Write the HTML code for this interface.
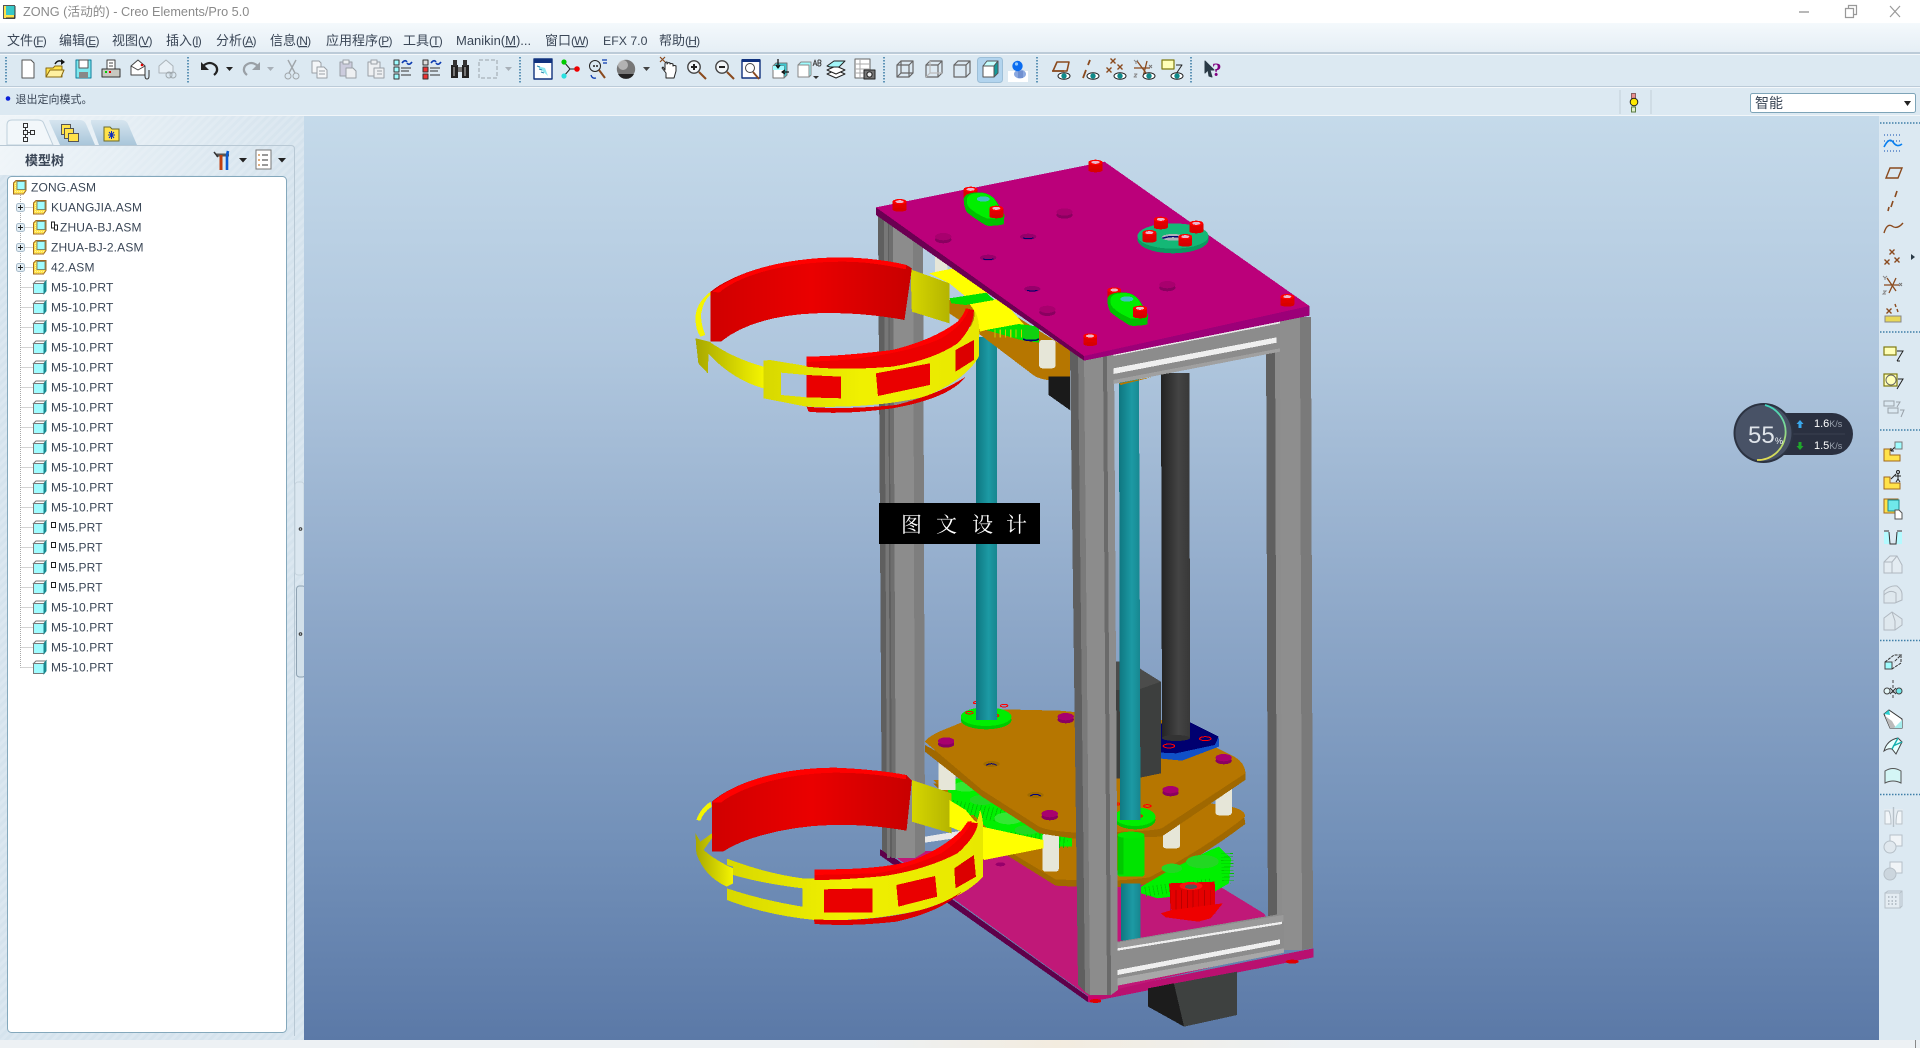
<!DOCTYPE html>
<html><head><meta charset="utf-8"><title>ZONG (活动的) - Creo Elements/Pro 5.0</title>
<style>
html,body{margin:0;padding:0;width:1920px;height:1048px;overflow:hidden;background:#dce9f2}
svg{display:block;position:absolute;left:0;top:0}
text{font-family:"Liberation Sans","Noto Sans CJK SC",sans-serif;fill:#3a4656}
.m{font-size:13px}.t{font-size:12px;letter-spacing:.15px}
.l{font-size:12px;letter-spacing:-.8px}
.u{text-decoration:underline}
</style></head><body>
<svg width="1920" height="1048" viewBox="0 0 1920 1048" xmlns="http://www.w3.org/2000/svg">
<defs>
<linearGradient id="vp" x1="0" y1="0" x2="0" y2="1"><stop offset="0" stop-color="#c5daea"/><stop offset=".25" stop-color="#b0c7de"/><stop offset=".55" stop-color="#8da7c8"/><stop offset=".78" stop-color="#7391b9"/><stop offset="1" stop-color="#5b79a7"/></linearGradient>
<linearGradient id="mn" x1="0" y1="0" x2="0" y2="1"><stop offset="0" stop-color="#f4f9fc"/><stop offset="1" stop-color="#e5eef5"/></linearGradient>
<linearGradient id="bt" x1="0" y1="0" x2="1" y2="0"><stop offset="0" stop-color="#edf1f4"/><stop offset=".45" stop-color="#edf1f4"/><stop offset=".55" stop-color="#f3ecdf"/><stop offset=".68" stop-color="#edf1f4"/><stop offset="1" stop-color="#edf1f4"/></linearGradient>
<linearGradient id="pn" x1="0" y1="0" x2="1" y2="0"><stop offset="0" stop-color="#f2f7fa" stop-opacity=".9"/><stop offset="1" stop-color="#f2f7fa" stop-opacity="0"/></linearGradient>
<linearGradient id="tl" x1="0" y1="0" x2="1" y2="0"><stop offset="0" stop-color="#0e7680"/><stop offset=".6" stop-color="#1c9aa4"/><stop offset="1" stop-color="#17868f"/></linearGradient>
<linearGradient id="dk" x1="0" y1="0" x2="1" y2="0"><stop offset="0" stop-color="#222"/><stop offset=".6" stop-color="#444"/><stop offset="1" stop-color="#383838"/></linearGradient>
<linearGradient id="rd" x1="0" y1="0" x2="1" y2="0"><stop offset="0" stop-color="#d00000"/><stop offset=".5" stop-color="#ea0000"/><stop offset="1" stop-color="#c80000"/></linearGradient>
<linearGradient id="yl" x1="0" y1="0" x2="1" y2="0"><stop offset="0" stop-color="#d8d800"/><stop offset=".45" stop-color="#f0f000"/><stop offset="1" stop-color="#e8e800"/></linearGradient>
<linearGradient id="yd" x1="0" y1="0" x2="1" y2="0"><stop offset="0" stop-color="#a8a800"/><stop offset="1" stop-color="#f4f400"/></linearGradient>
<linearGradient id="yc" x1="0" y1="0" x2="1" y2="0"><stop offset="0" stop-color="#d6d600"/><stop offset="1" stop-color="#b4b400"/></linearGradient>
<linearGradient id="ta" x1="0" y1="0" x2="0" y2="1"><stop offset="0" stop-color="#d6e5ef"/><stop offset="1" stop-color="#a9c6da"/></linearGradient>
<linearGradient id="ring" x1="0" y1="0" x2="0" y2="1"><stop offset="0" stop-color="#3ed6c0"/><stop offset="1" stop-color="#e4dc50"/></linearGradient>
<pattern id="ht" width="6" height="6" patternUnits="userSpaceOnUse" patternTransform="rotate(45)"><rect width="6" height="6" fill="#dbe7f0"/><rect width="3" height="6" fill="#d5e3ed"/></pattern>
<pattern id="ck" width="2" height="2" patternUnits="userSpaceOnUse"><rect width="2" height="2" fill="#ffe24a"/><rect width="1" height="1" fill="#fff4a0"/></pattern>
<g id="b"><rect x="-17" y="-10" width="34" height="24" fill="#e00000"/><ellipse cx="0" cy="14" rx="17" ry="6" fill="#d80000"/><ellipse cx="0" cy="-10" rx="17" ry="8" fill="#ff0000"/><ellipse cx="0" cy="-10" rx="10" ry="4.500" fill="#eab4cc"/></g>
<g id="pb"><ellipse cx="0" cy="6" rx="20" ry="11" fill="#8a0060"/><ellipse cx="0" cy="-3" rx="20" ry="11" fill="#a8006e"/></g>
<g id="h"><ellipse cx="0" cy="0" rx="20" ry="9" fill="#96006b"/><path d="M-13 4Q0 8 13 4" stroke="#000070" stroke-width="3" fill="none"/></g>
<g id="gm"><path d="M-48 -8Q-45 -28 -10 -28Q20 -28 36 6L52 40L50 68Q30 74 8 72Q-20 52 -40 32Q-48 15 -48 -8Z" fill="#00c000"/><path d="M-40 -8Q-38 -26 -5 -26Q22 -24 34 6L50 44Q30 54 8 50Q-20 35 -34 18Q-42 8 -40 -8Z" fill="#00ee00"/><ellipse cx="0" cy="-8" rx="16" ry="8" fill="#40c0c0"/><use href="#b" x="32" y="30"/></g>
<g id="ip"><path d="M.5 -3.500L3 -6H13L11 -3.500Z" fill="#fff" stroke="#777"/><rect x=".5" y="-3.500" width="10.500" height="10" fill="#9ffcff" stroke="#7a7a7a"/><path d="M11 -3.500L13 -6V4L11 6.500Z" fill="#1a8a90" stroke="#1a8a90"/></g>
<g id="ia"><rect x=".5" y="-4" width="10" height="11" fill="url(#ck)" stroke="#a06820"/><path d="M.5 -4L3 -6.500H13V3.500L10.500 7" fill="url(#ck)" stroke="#a06820"/><rect x="4" y="-5.500" width="8" height="8" fill="#9ffcff" stroke="#7a8a70"/></g>
<g id="eye"><ellipse cx="0" cy="0" rx="6" ry="3.200" fill="#fff" stroke="#222"/><circle r="2.700" fill="#0f8a8a"/></g>
<g id="x1"><path d="M-2.500 -2.500L2.500 2.500M2.500 -2.500L-2.500 2.500" stroke="#8a4a1e" stroke-width="1.400"/></g>
</defs>

<!-- chrome -->
<rect width="1920" height="1048" fill="#dce9f2"/>
<rect width="1920" height="23" fill="#fff"/>
<rect y="23" width="1920" height="30" fill="url(#mn)"/>
<rect y="52" width="1920" height="2" fill="#bccbd8"/><rect y="54" width="1920" height="1" fill="#f4f8fb"/>
<rect y="86" width="1920" height="1" fill="#bccbd8"/><rect y="87" width="1920" height="1" fill="#f4f8fb"/>
<rect y="115" width="1920" height="1.500" fill="#f2f6f9"/>
<rect x="0" y="1040" width="1920" height="8" fill="url(#bt)"/>
<text x="1863" y="1058" font-size="15" style="fill:#111">21:21</text>
<rect x="1915" y="1040" width="1" height="8" fill="#888"/>

<!-- title -->
<g transform="translate(3 5)"><rect x=".5" y=".5" width="11" height="13" fill="#ffe24a" stroke="#555"/><rect x="3" y="1" width="9" height="9" fill="#38c8c8"/><path d="M12 1V13H3" fill="none" stroke="#333"/></g>
<text x="23" y="16" font-size="12.700" style="fill:#8a8a8a">ZONG (活动的) - Creo Elements/Pro 5.0</text>
<path d="M1799 12H1809" stroke="#999" stroke-width="1.400"/>
<path d="M1845.500 8.500h8v9h-8zM1848.500 8.500v-3h8v9h-3" fill="none" stroke="#999" stroke-width="1.200"/>
<path d="M1890 6L1900 17M1900 6L1890 17" stroke="#999" stroke-width="1.200"/>

<!-- menu -->
<text class="m" x="7" y="45">文件<tspan class="l">(<tspan class="u">F</tspan>)</tspan></text>
<text class="m" x="59" y="45">编辑<tspan class="l">(<tspan class="u">E</tspan>)</tspan></text>
<text class="m" x="112" y="45">视图<tspan class="l">(<tspan class="u">V</tspan>)</tspan></text>
<text class="m" x="166" y="45">插入<tspan class="l">(<tspan class="u">I</tspan>)</tspan></text>
<text class="m" x="216" y="45">分析<tspan class="l">(<tspan class="u">A</tspan>)</tspan></text>
<text class="m" x="270" y="45">信息<tspan class="l">(<tspan class="u">N</tspan>)</tspan></text>
<text class="m" x="326" y="45">应用程序<tspan class="l">(<tspan class="u">P</tspan>)</tspan></text>
<text class="m" x="403" y="45">工具<tspan class="l">(<tspan class="u">T</tspan>)</tspan></text>
<text class="m" x="456" y="45">Manikin(<tspan class="u">M</tspan>)...</text>
<text class="m" x="545" y="45">窗口<tspan class="l">(<tspan class="u">W</tspan>)</tspan></text>
<text x="603" y="45" font-size="12.300">EFX 7.0</text>
<text class="m" x="659" y="45">帮助<tspan class="l">(<tspan class="u">H</tspan>)</tspan></text>

<!-- toolbar separators -->
<path d="M6 57V84M188 57V84M520 57V84M884 57V84M1037 57V84M1191 57V84" stroke="#3f7fa8" stroke-width="1.600" stroke-dasharray="1.500 1.500"/>

<!-- toolbar icons -->
<g fill="none" stroke-linejoin="round">
<g transform="translate(28 69)"><path d="M-6 -9H3L6 -6V9H-6Z" fill="#fff" stroke="#555"/></g>
<g transform="translate(55 69)"><path d="M-9 -1H-2L0 -3H7V8H-9Z" fill="#ffe24a" stroke="#8a6a10"/><path d="M-9 8L-5 1H9L6 8Z" fill="#fff0a0" stroke="#8a6a10"/><path d="M0 -5Q3 -10 8 -7" stroke="#111" stroke-width="1.500"/><path d="M6 -10L10 -7L6 -4Z" fill="#111"/></g>
<g transform="translate(84 69)"><rect x="-8" y="-9" width="15" height="18" fill="#7fe8ee" stroke="#0c7c9a"/><rect x="-5" y="-9" width="9" height="8" fill="#fff" stroke="#555"/><rect x="-5" y="3" width="9" height="6" fill="#888"/></g>
<g transform="translate(111 69)"><rect x="-4" y="-9" width="8" height="9" fill="#fff" stroke="#444"/><path d="M-2 -6H2M-2 -3H2" stroke="#444"/><rect x="-9" y="0" width="18" height="8" fill="#c8c8c0" stroke="#333"/><path d="M-6 3h2" stroke="#0c0" stroke-width="2"/><path d="M-2 3h2" stroke="#d00" stroke-width="2"/></g>
<g transform="translate(139 69)"><path d="M-8 -3L-1 -9L6 -3V6H-8Z" fill="#fff" stroke="#444"/><path d="M-8 -3L-1 1L6 -3" stroke="#444"/><circle cx="3" cy="-4" r="1.300" fill="#d00"/><path d="M6 -1V7Q6 10 8 10Q10 10 10 7V1" stroke="#333"/></g>
<g transform="translate(167 69)" opacity=".35"><path d="M-8 -3L-1 -9L6 -3V4H-8Z" fill="#fff" stroke="#555"/><circle cx="2" cy="6" r="3" stroke="#333"/><circle cx="6" cy="6" r="3" stroke="#333"/></g>
<g transform="translate(210 69)"><path d="M-7 -3Q0 -9 6 -3Q9 2 4 6" stroke="#222" stroke-width="2.200"/><path d="M-9 -7V1H-1Z" fill="#222"/></g>
<path d="M226 67h7l-3.500 4z" fill="#222"/>
<g transform="translate(251 69)"><path d="M7 -3Q0 -9 -6 -3Q-9 2 -4 6" stroke="#9aa0a6" stroke-width="2.200"/><path d="M9 -7V1H1Z" fill="#9aa0a6"/></g>
<path d="M267 67h7l-3.500 4z" fill="#a8b0b8"/>
<g transform="translate(292 69)" stroke="#a0a6aa"><path d="M-4 -9L3 4M4 -9L-3 4" stroke-width="1.400"/><circle cx="-4" cy="7" r="3"/><circle cx="4" cy="7" r="3"/></g>
<g transform="translate(320 69)" fill="#f4f6f8" stroke="#9aa0a6"><path d="M-8 -8H-1L1 -6V4H-8Z"/><path d="M-3 -2H4L7 1V9H-3Z"/><path d="M-1 2H5M-1 5H5"/></g>
<g transform="translate(348 69)" fill="#eef0f2" stroke="#9aa0a6"><rect x="-8" y="-7" width="12" height="14" fill="#ccd"/><rect x="-5" y="-9" width="6" height="4"/><path d="M-2 -1H5L8 2V9H-2Z"/></g>
<g transform="translate(376 69)" fill="#eef0f2" stroke="#9aa0a6"><rect x="-8" y="-7" width="12" height="14"/><rect x="-5" y="-9" width="6" height="4"/><rect x="-2" y="-1" width="10" height="10"/><path d="M1 2h5M1 5h5"/></g>
<g transform="translate(403 69)"><rect x="-9" y="-9" width="5" height="5" fill="#9ffcff" stroke="#333"/><rect x="-9" y="-2" width="5" height="5" fill="#9ffcff" stroke="#333"/><rect x="-9" y="5" width="5" height="5" fill="#9ffcff" stroke="#333"/><path d="M-2 -1h10M-2 2h8M-2 6h10" stroke="#333"/><path d="M-1 -6Q2 -10 4 -7M9 -7Q6 -3 4 -6" stroke="#0a3ab0" stroke-width="1.600"/></g>
<g transform="translate(432 69)"><rect x="-9" y="-9" width="5" height="5" fill="#ddd" stroke="#333"/><rect x="-9" y="-2" width="5" height="5" fill="#e33" stroke="#333"/><rect x="-9" y="5" width="5" height="5" fill="#e33" stroke="#333"/><path d="M-2 -1h10M-2 2h8M-2 6h10" stroke="#333"/><path d="M-1 -6Q2 -10 4 -7M9 -7Q6 -3 4 -6" stroke="#0a3ab0" stroke-width="1.600"/></g>
<g transform="translate(460 69)"><rect x="-9" y="-4" width="7" height="13" fill="#222"/><rect x="2" y="-4" width="7" height="13" fill="#222"/><rect x="-7" y="-9" width="4" height="6" fill="#333"/><rect x="3" y="-9" width="4" height="6" fill="#333"/><rect x="-2" y="-2" width="4" height="5" fill="#777"/><path d="M-6 -2V7M5 -2V7" stroke="#ccc"/></g>
<rect x="479" y="60" width="18" height="18" stroke="#9aa2aa" stroke-dasharray="4 2"/>
<path d="M505 67h7l-3.500 4z" fill="#a8b0b8"/>
<g transform="translate(543 69)"><rect x="-9" y="-10" width="18" height="20" fill="#fff" stroke="#11327e" stroke-width="1.400"/><rect x="-9" y="-10" width="18" height="4" fill="#11327e"/><path d="M-6 -3L5 7L2 -1Z" fill="#8fe8f0"/><path d="M-6 -3l3 1M-4 0l3 1M-2 3l3 1" stroke="#2a8ab0"/></g>
<g transform="translate(570 69)"><path d="M-6 -7L0 0L-6 7M0 0H7" stroke="#222"/><circle cx="-6" cy="-7" r="2.600" fill="#0c0"/><circle cx="-6" cy="7" r="2.600" fill="#2ae0e0"/><circle cx="7" cy="0" r="2.800" fill="#e00"/></g>
<g transform="translate(598 69)"><circle cx="-3" cy="-3" r="5.500" stroke="#222"/><path d="M1 1L7 9" stroke="#8a4a1e" stroke-width="2"/><circle cx="-4" cy="-3" r="1" fill="#222"/><circle cx="-1" cy="-3" r="1" fill="#222"/><path d="M4 -9h5M5 -6h4M-7 6Q-6 10 -2 9" stroke="#0a3ab0" stroke-width="1.300"/></g>
<circle cx="626" cy="69" r="9.200" fill="#777"/><circle cx="623" cy="65" r="5" fill="#ccc" opacity=".7"/><path d="M618 74a9 9 0 0 0 16 0" fill="#222"/>
<path d="M643 67h7l-3.500 4z" fill="#444"/>
<g transform="translate(669 69)"><path d="M-7 -1L-3 4V9H5L7 2V-3Q5 -4 4 -3V-5Q2 -6 1 -5V-6Q-1 -7 -2 -5L-2 -7Q-4 -7 -4 -5V1L-6 -2Z" fill="#fff" stroke="#222"/><path d="M-11 -11l5 5M-6 -11l-5 5" stroke="#8a4a1e" stroke-width="1.200" transform="translate(2 -1)"/></g>
<g transform="translate(696 69)"><circle cx="-2" cy="-2" r="6.200" fill="#f2f6f9" stroke="#444" stroke-width="1.400"/><path d="M-5 -2H1M-2 -5V1" stroke="#222" stroke-width="2"/><path d="M3 3L10 10" stroke="#8a4a1e" stroke-width="2"/></g>
<g transform="translate(724 69)"><circle cx="-2" cy="-2" r="6.200" fill="#f2f6f9" stroke="#444" stroke-width="1.400"/><path d="M-5 -2H1" stroke="#222" stroke-width="2"/><path d="M3 3L10 10" stroke="#8a4a1e" stroke-width="2"/></g>
<g transform="translate(751 69)"><rect x="-9" y="-9" width="18" height="18" fill="#fff" stroke="#11327e" stroke-width="1.400"/><rect x="-9" y="-10" width="18" height="3" fill="#11327e"/><circle cx="-1" cy="-1" r="4.500" stroke="#444"/><path d="M2 3L8 10" stroke="#8a4a1e" stroke-width="1.800"/></g>
<g transform="translate(779 69)"><rect x="-6" y="-3" width="11" height="12" fill="#fff" stroke="#777"/><path d="M-6 -3L-3 -6H8V6L5 9V-3Z" fill="#3ec8d0" stroke="#777"/><path d="M-6 -3H5V1H-6Z" fill="#9ffcff"/><path d="M-1 -10V-1M-3 -4L-1 -1L1 -4" stroke="#111" stroke-width="1.300"/><path d="M10 3H3M6 1L3 3L6 5" stroke="#111" stroke-width="1.300"/></g>
<g transform="translate(807 69)"><rect x="-9" y="-4" width="11" height="12" fill="#fff" stroke="#888"/><path d="M-9 -4L-6 -7H4V6L2 8V-4Z" fill="#9ffcff" stroke="#888"/><path d="M6 -3L8 -9L10 -3M7 -5H9" stroke="#444"/><path d="M12 -9V-3M12 -9H14Q16 -8 14 -6H12M14 -6Q16 -5 14 -3H12" stroke="#444" transform="translate(-1 0)"/><path d="M6 7h6l-3 3z" fill="#333"/></g>
<g transform="translate(836 69)" fill="#fff" stroke="#222"><path d="M-9 5L0 1L9 5L0 9Z"/><path d="M-9 1L0 -3L9 1L0 5Z"/><path d="M-9 -3L-2 -8H9L3 -2H-6Z" fill="#a2f6f8"/></g>
<g transform="translate(864 69)"><rect x="-9" y="-10" width="15" height="19" fill="#fff" stroke="#666"/><path d="M-9 -5H6M-9 0H6M-9 4H6M-4 -10V9" stroke="#aaa"/><rect x="0" y="1" width="11" height="9" fill="#777" stroke="#222"/><circle cx="5.500" cy="5.500" r="2.600" fill="#eee" stroke="#222"/></g>
<g transform="translate(905 69)" stroke="#666" stroke-width="1.200"><rect x="-8" y="-4" width="12" height="12"/><rect x="-4" y="-8" width="12" height="12"/><path d="M-8 -4L-4 -8M4 -4L8 -8M4 8L8 4M-8 8L-4 4"/></g>
<g transform="translate(934 69)" stroke="#666" stroke-width="1.200"><rect x="-8" y="-4" width="12" height="12"/><path d="M-8 -4L-4 -8H8V4L4 8M4 -4L8 -8"/><path d="M-4 -8V4H8M-8 8L-4 4" stroke="#bbb"/></g>
<g transform="translate(962 69)" stroke="#666" stroke-width="1.200"><rect x="-8" y="-4" width="12" height="12"/><path d="M-8 -4L-4 -8H8V4L4 8M4 -4L8 -8"/></g>
<rect x="977.500" y="57.500" width="25" height="25" rx="3" fill="#b2d4ee" stroke="#9dbfd8"/>
<g transform="translate(990 69)"><rect x="-7" y="-3" width="11" height="11" fill="#fff" stroke="#555"/><path d="M-7 -3L-3 -8H8L4 -3Z" fill="#c4ffff" stroke="#555"/><path d="M4 -3L8 -8V4L4 8Z" fill="#149a9a" stroke="#555"/></g>
<rect x="1008" y="71" width="20" height="11" fill="#fff"/><ellipse cx="1020" cy="74" rx="6" ry="4.500" fill="#8aa8e0"/><path d="M1018 71h5v7h-5" fill="#7090d0"/><circle cx="1017.500" cy="66" r="5.200" fill="#0a6cf0"/><circle cx="1016.500" cy="64" r="1.600" fill="#8fc8ff"/>
<g transform="translate(1060 69)"><path d="M-7 2L-3 -7H9L7 2Z" stroke="#8a4a1e" stroke-width="1.600" fill="none"/><path d="M-8 2H4" stroke="#8a4a1e" stroke-width="1.600"/><use href="#eye" x="4" y="7"/></g>
<g transform="translate(1089 69)"><path d="M1 -9L-1 -4M-3 1L-6 9" stroke="#8a4a1e" stroke-width="1.800"/><use href="#eye" x="4" y="7"/></g>
<g transform="translate(1115 69)"><use href="#x1" x="-2" y="-8"/><use href="#x1" x="-6" y="1"/><use href="#x1" x="5" y="-2"/><use href="#eye" x="5" y="7"/></g>
<g transform="translate(1144 69)"><path d="M-10 -1H6M-7 -8L2 4M3 -8L-1 8" stroke="#8a4a1e" stroke-width="1.300"/><path d="M-10 -9l2 2 2 -2M-8 -7v2M-10 5h3l-3 3h3" stroke="#888"/><use href="#eye" x="5" y="7"/><path d="M5 -4l3 3M8 -4l-3 3" stroke="#777"/></g>
<g transform="translate(1173 69)"><rect x="-11" y="-9" width="12" height="9" fill="#ffffb8" stroke="#7e7a10" stroke-width="1.200"/><path d="M3 -4H9L3 5M3 5h4" stroke="#222"/><use href="#eye" x="4" y="7"/></g>
<g transform="translate(1213 69)"><path d="M-8 -8L1 1H-3L-1 8L-4 7L-5 1L-8 4Z" fill="#2a3a46" stroke="#2a3a46"/></g>
<text x="1212" y="76" font-size="19" font-weight="bold" style="font-family:'Liberation Serif',serif;fill:#800080">?</text>
</g>

<!-- status -->
<circle cx="8" cy="98.500" r="2.300" fill="#0a20d8"/>
<text x="15.500" y="103" font-size="11">退出定向模式。</text>
<path d="M1620 90V114M1651 90V114" stroke="#c2ced8"/>
<rect x="1631.500" y="93.500" width="4" height="5" fill="#e88f8f" stroke="#8a6060"/><circle cx="1634" cy="102" r="3.800" fill="#ffe800" stroke="#222"/><rect x="1631.500" y="107" width="4" height="5" fill="#dfeecc" stroke="#5a7a40"/>
<rect x="1750.500" y="93.500" width="165" height="19" rx="2" fill="#fff" stroke="#7ea4b8"/>
<text x="1755" y="108" font-size="14">智能</text>
<path d="M1904 101h7l-3.500 5z" fill="#222"/>

<!-- left panel -->
<rect x="0" y="116" width="304" height="924" fill="url(#ht)"/>
<rect x="0" y="116" width="304" height="30" fill="url(#pn)"/>
<path d="M53 145L44 124Q43 120 38 120H12Q7 120 7 125V145Z" fill="#f2f7fa" stroke="#bfd0dc"/>
<path d="M49 120H80Q84 120 86 124L95 145H60L50 123Z" fill="url(#ta)"/>
<path d="M91 120H122Q126 120 128 124L137 145H99L91 123Z" fill="url(#ta)"/>
<g fill="none" stroke="#333"><rect x="23.500" y="123.500" width="4" height="4"/><rect x="23.500" y="130.500" width="4" height="4"/><rect x="23.500" y="137.500" width="4" height="4"/><rect x="30.500" y="130.500" width="4" height="4"/><path d="M25.500 127.500v3M25.500 134.500v3M27.500 132.500h3"/></g>
<g stroke="#555"><rect x="61.500" y="124.500" width="9" height="10" fill="#ffe24a"/><rect x="64.500" y="128.500" width="9" height="10" fill="#ffe24a"/><rect x="68.500" y="133.500" width="10" height="8" fill="#ffe24a"/></g>
<path d="M104 127h6l2 2h7v12h-15z" fill="#ffe24a" stroke="#6a6a30"/><path d="M108 135h7M111.500 131v8M109 132l5 6M114 132l-5 6" stroke="#0a2ac0"/>
<rect x="0" y="145" width="294" height="895" fill="url(#ht)"/>
<rect x="0" y="145" width="294" height="30" fill="url(#pn)"/>
<path d="M0 145.500H291Q294.500 145.500 294.500 149V1036" fill="none" stroke="#b8c8d4"/>
<text x="25" y="165" font-size="13" font-weight="bold">模型树</text>
<g transform="translate(224 160)"><path d="M-8 -5H5" stroke="#555" stroke-width="3"/><path d="M-3 -5V10" stroke="#c04010" stroke-width="3"/><path d="M4 -9L3 -5V10" stroke="#0a5ad0" stroke-width="2.600" fill="none"/><path d="M-10 -8L-6 -3" stroke="#333" stroke-width="1.500"/></g>
<path d="M239 158h8l-4 4.500z" fill="#222"/>
<g transform="translate(264 160)"><rect x="-8" y="-10" width="15" height="19" fill="#fff" stroke="#777"/><path d="M-2 -5H4M-2 0H4M-2 5H4" stroke="#333"/><path d="M-6 -5h2M-6 0h2M-6 5h2" stroke="#c06000"/></g>
<path d="M278 158h8l-4 4.500z" fill="#222"/>
<rect x="7.500" y="176.500" width="279" height="856" rx="4" fill="#fff" stroke="#84a8bc"/>
<rect x="295" y="482" width="9" height="93" rx="3" fill="#dbe7f0" stroke="#c6d4de"/><circle cx="300.500" cy="529" r="1.300" fill="none" stroke="#333"/>
<rect x="296.500" y="586" width="9" height="91" rx="3" fill="#d2e0ea" stroke="#8fa3b3"/><circle cx="300.500" cy="634" r="1.300" fill="none" stroke="#333"/>
<rect x="304" y="116" width="1575" height="924" fill="url(#vp)"/>

<!-- tree -->
<path d="M20.500 195V667.500M20.500 207.500H33M20.500 227.500H33M20.500 247.500H33M20.500 267.500H33M20.500 287.500H33M20.500 307.500H33M20.500 327.500H33M20.500 347.500H33M20.500 367.500H33M20.500 387.500H33M20.500 407.500H33M20.500 427.500H33M20.500 447.500H33M20.500 467.500H33M20.500 487.500H33M20.500 507.500H33M20.500 527.500H33M20.500 547.500H33M20.500 567.500H33M20.500 587.500H33M20.500 607.500H33M20.500 627.500H33M20.500 647.500H33M20.500 667.500H33" stroke="#a8a8a8" stroke-dasharray="1 1" fill="none"/>
<g fill="#e2edf4" stroke="#a9bccb"><rect x="16.500" y="203.500" width="8" height="8" rx="2"/><rect x="16.500" y="223.500" width="8" height="8" rx="2"/><rect x="16.500" y="243.500" width="8" height="8" rx="2"/><rect x="16.500" y="263.500" width="8" height="8" rx="2"/></g>
<path d="M18 207.500h5M20.500 205v5M18 227.500h5M20.500 225v5M18 247.500h5M20.500 245v5M18 267.500h5M20.500 265v5" stroke="#222"/>
<use href="#ia" x="13" y="187"/><use href="#ia" x="33" y="207"/><use href="#ia" x="33" y="227"/><use href="#ia" x="33" y="247"/><use href="#ia" x="33" y="267"/>
<use href="#ip" x="33" y="287"/><use href="#ip" x="33" y="307"/><use href="#ip" x="33" y="327"/><use href="#ip" x="33" y="347"/><use href="#ip" x="33" y="367"/><use href="#ip" x="33" y="387"/><use href="#ip" x="33" y="407"/><use href="#ip" x="33" y="427"/><use href="#ip" x="33" y="447"/><use href="#ip" x="33" y="467"/><use href="#ip" x="33" y="487"/><use href="#ip" x="33" y="507"/><use href="#ip" x="33" y="527"/><use href="#ip" x="33" y="547"/><use href="#ip" x="33" y="567"/><use href="#ip" x="33" y="587"/><use href="#ip" x="33" y="607"/><use href="#ip" x="33" y="627"/><use href="#ip" x="33" y="647"/><use href="#ip" x="33" y="667"/>
<text class="t" x="31" y="191.500">ZONG.ASM</text>
<text class="t" x="51" y="211.500">KUANGJIA.ASM</text>
<path d="M51.500 222v6h3v-6zM54.500 225h3v5h-3v-2" fill="#fff" stroke="#222"/>
<text class="t" x="60" y="231.500">ZHUA-BJ.ASM</text>
<text class="t" x="51" y="251.500">ZHUA-BJ-2.ASM</text>
<text class="t" x="51" y="271.500">42.ASM</text>
<text class="t" x="51" y="291.500">M5-10.PRT</text>
<text class="t" x="51" y="311.500">M5-10.PRT</text>
<text class="t" x="51" y="331.500">M5-10.PRT</text>
<text class="t" x="51" y="351.500">M5-10.PRT</text>
<text class="t" x="51" y="371.500">M5-10.PRT</text>
<text class="t" x="51" y="391.500">M5-10.PRT</text>
<text class="t" x="51" y="411.500">M5-10.PRT</text>
<text class="t" x="51" y="431.500">M5-10.PRT</text>
<text class="t" x="51" y="451.500">M5-10.PRT</text>
<text class="t" x="51" y="471.500">M5-10.PRT</text>
<text class="t" x="51" y="491.500">M5-10.PRT</text>
<text class="t" x="51" y="511.500">M5-10.PRT</text>
<rect x="51.500" y="522.500" width="4" height="5" fill="#fff" stroke="#222"/><text class="t" x="58" y="531.500">M5.PRT</text>
<rect x="51.500" y="542.500" width="4" height="5" fill="#fff" stroke="#222"/><text class="t" x="58" y="551.500">M5.PRT</text>
<rect x="51.500" y="562.500" width="4" height="5" fill="#fff" stroke="#222"/><text class="t" x="58" y="571.500">M5.PRT</text>
<rect x="51.500" y="582.500" width="4" height="5" fill="#fff" stroke="#222"/><text class="t" x="58" y="591.500">M5.PRT</text>
<text class="t" x="51" y="611.500">M5-10.PRT</text>
<text class="t" x="51" y="631.500">M5-10.PRT</text>
<text class="t" x="51" y="651.500">M5-10.PRT</text>
<text class="t" x="51" y="671.500">M5-10.PRT</text>

<!-- MODEL -->
<g shape-rendering="crispEdges">
<!-- lower plate -->
<g transform="translate(680 620) scale(.40816 .33333)">
<polygon points="490,688 510,700 1000,1130 1000,1147 490,706" fill="#5e004a"/>
<polygon points="1000,1122 1552,985 1552,1012 1000,1147" fill="#b91070"/>
<polygon points="510,695 800,690 1310,790 1430,880 1500,985 1000,1128" fill="#c01878"/>
<polygon points="600,650 700,630 700,650 600,668" fill="#e8e8e8"/>
<ellipse cx="785" cy="733" rx="12" ry="6" fill="#96006b"/>
<polygon points="1147,1105 1365,1055 1365,1185 1235,1220 1147,1160" fill="#3e4140"/>
<polygon points="1147,1105 1210,1090 1235,1220 1147,1160" fill="#1c1c1c"/>
<polygon points="1000,1130 1030,1130 1030,1148 1004,1148" fill="#d0006a"/>
<ellipse cx="1018" cy="1143" rx="14" ry="6" fill="#e00000"/><ellipse cx="1500" cy="1025" rx="16" ry="6" fill="#e00000"/>
</g>
<!-- left column -->
<polygon points="878,215 889,215 892,858 882,850" fill="#5f5f5f"/>
<polygon points="884,215 888,215 890,858 887,858" fill="#777"/>
<polygon points="889,215 893,215 896,858 892,858" fill="#6e6e6e"/>
<polygon points="893,215 913,215 915,858 896,858" fill="#8c8c8c"/>
<polygon points="913,215 923,215 925,852 915,858" fill="#7e7e7e"/>
<g transform="translate(680 620) scale(.40816 .33333)">
<!-- lower assembly -->
<path d="M620 490L1000 500L1350 565Q1385 575 1385 612Q1280 710 1150 792Q1075 805 1000 802L920 797L800 705Z" fill="#a06800"/>
<path d="M620 480L1000 490L1350 560Q1385 570 1385 590Q1280 690 1150 772Q1075 785 1000 782L920 778L800 690Z" fill="#b67600"/>
<rect x="1183" y="590" width="42" height="95" rx="8" fill="#e6e6d8"/>
<rect x="1312" y="498" width="40" height="88" rx="8" fill="#e6e6d8"/>
<!-- gears -->
<polygon points="1130,800 1200,750 1300,690 1320,680 1350,715 1345,790 1310,815 1170,835 1130,820" fill="#00f000"/>
<path d="M1140 815L1300 790M1340 700L1343 790" stroke="#00c800" stroke-width="30" stroke-dasharray="2 8" fill="none"/>
<ellipse cx="1280" cy="725" rx="40" ry="20" fill="#22d822"/><ellipse cx="1205" cy="745" rx="25" ry="14" fill="#22d822"/>
<polygon points="1198,790 1310,785 1312,880 1270,892 1205,887" fill="#e40000"/>
<path d="M1200 845H1312" stroke="#b80000" stroke-width="70" stroke-dasharray="2 12" fill="none"/>
<polygon points="1178,880 1205,870 1330,850 1300,895 1270,905 1190,892" fill="#ee0000"/>
<ellipse cx="1252" cy="798" rx="28" ry="12" fill="#ff1010"/><ellipse cx="1252" cy="800" rx="15" ry="7" fill="#555"/>
<!-- teal rod lower segment -->
<rect x="1080" y="790" width="48" height="172" fill="url(#tl)"/>
<polygon points="650,480 720,470 800,560 880,620 960,650 960,680 880,680 800,685 720,585 670,580" fill="#00f000"/>
<path d="M665 560L800 590M790 655L950 665" stroke="#00c000" stroke-width="40" stroke-dasharray="2 8" fill="none"/>
<ellipse cx="700" cy="500" rx="30" ry="15" fill="#33e833"/><ellipse cx="740" cy="540" rx="30" ry="15" fill="#22d822"/><ellipse cx="805" cy="595" rx="35" ry="18" fill="#33e833"/><ellipse cx="850" cy="630" rx="30" ry="14" fill="#22d822"/>
<rect x="633" y="425" width="42" height="85" fill="#e6e6d8"/>
<rect x="888" y="640" width="40" height="115" rx="8" fill="#e6e6d8"/>
<!-- upper orange -->
<path d="M600 375V395L740 530L880 640L960 655L1180 650L1385 480V455L1180 610L960 615Z" fill="#a06800"/>
<path d="M600 365Q610 345 665 320Q730 285 790 268L930 272L1180 300L1350 405Q1385 425 1385 460L1180 625Q1150 637 960 637Q900 632 880 620L740 510Z" fill="#b67600"/>
<!-- navy flange & rod -->
<polygon points="1130,330 1230,295 1320,355 1320,380 1230,422 1130,410" fill="#1050c8"/>
<polygon points="1130,325 1230,295 1320,350 1310,375 1215,400 1130,395" fill="#000070"/>
<polygon points="1068,125 1100,125 1178,185 1178,460 1120,475 1068,475" fill="#3d3f3e"/>
<polygon points="1068,125 1100,125 1178,185 1120,210 1068,210" fill="#4b4c4b"/>
<!-- green flanges -->
<ellipse cx="750" cy="300" rx="62" ry="28" fill="#00c800"/><ellipse cx="750" cy="290" rx="62" ry="28" fill="#00ee00"/>
<ellipse cx="1115" cy="600" rx="50" ry="28" fill="#00c800"/><ellipse cx="1115" cy="590" rx="50" ry="28" fill="#00ee00"/>
<g fill="none" stroke="#ff0000" stroke-width="3">
<ellipse cx="794" cy="257" rx="9" ry="4"/><ellipse cx="772" cy="287" rx="9" ry="4"/><ellipse cx="709" cy="278" rx="9" ry="4"/><ellipse cx="724" cy="248" rx="5" ry="3"/>
<ellipse cx="1145" cy="558" rx="9" ry="4"/><ellipse cx="1124" cy="588" rx="9" ry="4"/><ellipse cx="1074" cy="552" rx="4" ry="3"/>
<ellipse cx="1198" cy="378" rx="14" ry="6"/><ellipse cx="1287" cy="356" rx="14" ry="6"/>
</g>
<use href="#pb" x="652" y="366"/><use href="#pb" x="945" y="293"/><use href="#pb" x="906" y="584"/><use href="#pb" x="1202" y="512"/><use href="#pb" x="1332" y="416"/>
<ellipse cx="763" cy="432" rx="20" ry="9" fill="#a06c00"/><path d="M750 436Q763 426 776 436" stroke="#000080" stroke-width="3" fill="none"/>
<ellipse cx="871" cy="525" rx="20" ry="9" fill="#a06c00"/><path d="M858 528Q871 518 884 528" stroke="#000080" stroke-width="3" fill="none"/>
</g>
<!-- rods -->
<rect x="976" y="337" width="21" height="383" fill="url(#tl)"/>
<polygon points="1161,373 1189.500,373 1190,738 1162,738" fill="url(#dk)"/>
<ellipse cx="1176" cy="738" rx="14" ry="3" fill="#333"/>
<g transform="translate(680 620) scale(.40816 .33333)">
<rect x="1072" y="645" width="66" height="125" rx="8" fill="#00e400"/>
<rect x="1072" y="645" width="14" height="118" fill="#00c800"/>
<ellipse cx="1105" cy="645" rx="33" ry="10" fill="#00e800"/>
</g>
<polygon points="1119,378 1139,378 1140.500,820 1120,820" fill="url(#tl)"/>
<!-- right column -->
<polygon points="1266,317 1275,317 1277,950 1268,945" fill="#5f5f5f"/>
<polygon points="1275,317 1280,317 1282,950 1277,950" fill="#8c8c8c"/>
<polygon points="1280,317 1300,317 1302,950 1282,950" fill="#8e8e8e"/>
<polygon points="1300,317 1311,317 1313,948 1302,950" fill="#7a7a7a"/>
<!-- front column -->
<polygon points="1070,350 1078,350 1085,992 1078,985" fill="#5f5f5f"/>
<polygon points="1078,350 1084,350 1090,995 1085,992" fill="#7a7a7a"/>
<polygon points="1084,350 1103,350 1107,995 1090,995" fill="#8c8c8c"/>
<polygon points="1103,350 1107,350 1111,995 1107,995" fill="#6a6a6a"/>
<polygon points="1107,350 1114,350 1118,990 1111,995" fill="#8c8c8c"/>
<!-- lower clamp + beam -->
<g transform="translate(680 620) scale(.40816 .33333)">
<polygon points="1072,965 1480,880 1480,995 1072,1095" fill="#8c8c8c"/>
<polygon points="1072,968 1478,885 1478,905 1072,985" fill="#9a9a9a"/>
<polygon points="1072,985 1475,905 1475,912 1072,992" fill="#efefef"/>
<polygon points="1072,1050 1470,958 1470,972 1072,1065" fill="#efefef"/>
<polygon points="1072,1075 1480,985 1480,998 1072,1097" fill="#a8a8a8"/>
<polygon points="568,480 665,520 665,640 568,605" fill="url(#yc)"/>
<polygon points="660,540 700,570 720,600 740,620 890,660 890,685 745,720 700,640 660,620" fill="#ffff00"/>
<path d="M78 545C130 490 240 443 380 443Q480 448 555 465L568 482L555 632Q460 612 370 615C270 618 160 650 105 695L78 695Z" fill="url(#rd)"/>
<path d="M78 548C130 490 240 443 380 443Q480 448 555 465L553 478Q470 458 380 458C260 460 150 500 100 548Z" fill="#ff0000"/>
<path d="M75 545Q50 565 40 600L50 602Q58 575 78 560Z" fill="#f4f400"/>
<path d="M38 640L50 665L78 640V655L58 690Q85 720 130 745V790L115 800Q60 770 40 700Z" fill="url(#yd)"/>
<path d="M115 716Q210 760 300 775Q400 778 500 765Q600 740 680 680Q725 640 735 570Q745 600 742 640V770Q700 830 590 870Q470 905 330 900Q210 885 115 840V805Q200 840 300 860V805Q200 790 130 765V740L115 735Z" fill="url(#yl)"/>
<path d="M330 748Q480 750 560 725Q640 690 690 630L705 605L730 610Q725 650 680 700Q600 750 500 768Q400 780 330 780Z" fill="#ec0000"/>
<path d="M330 748Q480 750 560 725Q640 690 690 630L705 605L715 603Q700 650 640 700Q560 745 480 760L330 765Z" fill="#ff0000"/>
<polygon points="353,808 472,805 472,878 353,878" fill="#ea0000"/>
<polygon points="530,795 625,768 630,830 535,860" fill="#ea0000"/>
<polygon points="672,745 720,705 725,770 675,805" fill="#dc0000"/>
<path d="M328 898Q470 908 590 870Q650 850 690 815Q640 875 530 905Q420 920 330 912Z" fill="#dc0000"/>
</g>
<!-- upper assembly -->
<g transform="translate(680 150) scale(.40816 .33333)">
<rect x="625" y="300" width="30" height="70" fill="#e6e6d8"/>
<path d="M660 450V490L720 540L860 670Q880 695 955 695V600L760 450Z" fill="#b67600"/>
<polygon points="903,680 955,680 955,780 903,735" fill="#1a1a1a"/>
<polygon points="565,358 660,400 660,520 568,485" fill="url(#yc)"/>
<polygon points="610,370 670,355 770,430 700,440 660,400" fill="#ffff00"/>
<polygon points="700,445 790,450 880,575 750,540 735,545 720,480" fill="#ffff00"/>
<polygon points="660,445 750,428 770,450 700,465 665,460" fill="#00e000"/>
<polygon points="750,540 830,522 880,530 880,578 835,570" fill="#00e000"/>
<path d="M770 550L875 550" stroke="#c8d000" stroke-width="24" stroke-dasharray="3 10" fill="none"/>
<ellipse cx="860" cy="568" rx="20" ry="6" fill="#000070"/>
<rect x="842" y="530" width="36" height="38" rx="6" fill="#10d010"/>
<rect x="880" y="570" width="40" height="85" rx="8" fill="#e6e6d8"/>
<path d="M75 425C120 380 230 322 400 322Q490 325 555 345L568 355L550 510Q440 485 330 490C230 495 150 525 100 575H75Z" fill="url(#rd)"/>
<path d="M80 425C130 378 230 322 400 322Q490 325 555 345L553 358Q470 335 400 335C250 335 140 380 96 428Z" fill="#ff0000"/>
<path d="M75 425Q38 460 38 505Q38 540 50 560L62 555Q50 520 52 490Q58 450 75 435Z" fill="#f4f400"/>
<path d="M38 565L72 575Q130 625 205 650V715Q130 690 70 612L68 670L45 640Z" fill="url(#yd)"/>
<path d="M205 632L220 630L320 650Q430 650 520 640Q620 620 680 570Q725 530 722 480Q735 510 733 560L732 620Q700 690 600 740Q480 775 310 770L205 745Z" fill="url(#yl)"/>
<path d="M310 620Q400 618 520 600Q620 570 680 515Q695 495 700 475L720 480Q720 530 680 580Q620 630 520 650Q400 662 310 650Z" fill="#ec0000"/>
<path d="M310 620Q400 618 520 600Q620 570 680 515Q695 495 700 475L708 477Q695 525 640 565Q560 610 400 630L310 636Z" fill="#ff0000"/>
<polygon points="248,668 310,675 310,742 248,735" fill="#a9c1db"/>
<polygon points="310,675 395,680 395,745 310,742" fill="#ea0000"/>
<polygon points="480,670 612,640 612,705 485,738" fill="#ea0000"/>
<polygon points="675,600 720,570 720,630 675,665" fill="#dc0000"/>
<path d="M310 770Q400 780 530 765Q640 730 700 680Q660 745 520 775Q400 795 315 785Z" fill="#dc0000"/>
<!-- beam -->
<polygon points="1062,615 1470,515 1470,600 1062,702" fill="#8c8c8c"/>
<polygon points="1062,610 1470,512 1470,520 1062,618" fill="#e8e8e8"/>
<polygon points="1062,655 1462,562 1462,578 1062,672" fill="#efefef"/>
<polygon points="1062,690 1470,595 1470,605 1062,702" fill="#a0a0a0"/>
<polygon points="1075,700 1160,680 1080,705" fill="#b67600"/>
<!-- top plate -->
<polygon points="480,172 480,195 990,632 1542,495 1542,468 990,610" fill="#6b0052"/>
<polygon points="990,618 1542,468 1542,497 990,632" fill="#9c0078"/>
<polygon points="480,172 1040,35 1542,468 990,618" fill="#bb007a"/>
<use href="#b" x="538" y="165"/><use href="#b" x="1018" y="47"/><use href="#b" x="1488" y="450"/><use href="#b" x="1005" y="568"/>
<use href="#pb" x="645" y="263"/><use href="#pb" x="942" y="189"/><use href="#pb" x="900" y="481"/><use href="#pb" x="1194" y="407"/>
<use href="#h" x="755" y="323"/><use href="#h" x="853" y="260"/><use href="#h" x="863" y="417"/>
<use href="#b" x="712" y="128"/><use href="#gm" x="743" y="155"/>
<use href="#b" x="1064" y="430"/><use href="#gm" x="1095" y="455"/>
<ellipse cx="1208" cy="268" rx="87" ry="42" fill="#0a9a60"/><ellipse cx="1208" cy="258" rx="87" ry="38" fill="#14b876"/>
<ellipse cx="1208" cy="262" rx="28" ry="10" fill="#b0b0b8"/><path d="M1182 265Q1208 254 1234 265" stroke="#000070" stroke-width="4" fill="none"/>
<use href="#b" x="1178" y="218"/><use href="#b" x="1265" y="230"/><use href="#b" x="1150" y="258"/><use href="#b" x="1238" y="270"/>
</g>
</g>
<rect x="879" y="503" width="161" height="41" fill="#000"/>
<text x="901" y="532" font-size="21" style="fill:#fff;font-family:'Noto Serif CJK SC',serif">图</text>
<text x="936" y="532" font-size="21" style="fill:#fff;font-family:'Noto Serif CJK SC',serif">文</text>
<text x="972" y="532" font-size="21" style="fill:#fff;font-family:'Noto Serif CJK SC',serif">设</text>
<text x="1006" y="532" font-size="21" style="fill:#fff;font-family:'Noto Serif CJK SC',serif">计</text>

<!-- widget -->
<rect x="1760" y="413" width="93" height="42" rx="21" fill="#2a3040"/>
<path d="M1792 434H1845" stroke="#3a4050"/>
<circle cx="1763.500" cy="433" r="30" fill="#2c3342"/><circle cx="1763.500" cy="433" r="28" fill="#485266"/>
<path d="M1765 405A28 28 0 0 1 1757 460" fill="none" stroke="url(#ring)" stroke-width="1.800"/>
<text x="1748" y="443" font-size="24" style="fill:#dfe4ea">55</text><text x="1775" y="444" font-size="9" style="fill:#eef2f6">%</text>
<path d="M1800 420l-3.500 4h2v4h3v-4h2z" fill="#3aa8ec"/><path d="M1800 450l-3.500 -4h2v-4h3v4h2z" fill="#1fa82a"/>
<text x="1814" y="427" font-size="11" style="fill:#fff">1.6<tspan font-size="9" style="fill:#9aa2ae">K/s</tspan></text>
<text x="1814" y="449" font-size="11" style="fill:#fff">1.5<tspan font-size="9" style="fill:#9aa2ae">K/s</tspan></text>

<!-- right toolbar -->
<rect x="1879" y="116" width="41" height="924" fill="#dce9f2"/>
<path d="M1880 123H1920M1880 332H1920M1880 430H1920M1880 640.500H1920M1880 794.500H1920" stroke="#3f7fa8" stroke-width="1.600" stroke-dasharray="1.500 1.500"/>
<g fill="none">
<g transform="translate(1893 143)"><path d="M-9 -8H9M-9 -2H9M-9 8H9" stroke="#0a4ab0" stroke-dasharray="1 2"/><path d="M-9 4Q-4 -6 0 -1Q4 5 9 1" stroke="#0a80f0" stroke-width="1.600"/></g>
<path d="M1886 178L1890 168H1902L1898 178Z" stroke="#8a4a1e" stroke-width="1.400"/>
<path d="M1897 191L1895 197M1893 201L1891 207M1889 207L1888 211" stroke="#8a4a1e" stroke-width="1.600"/>
<path d="M1884 233Q1887 223 1892 226Q1897 230 1903 223" stroke="#8a4a1e" stroke-width="1.400"/>
<use href="#x1" x="1892" y="252"/><use href="#x1" x="1887" y="262"/><use href="#x1" x="1897" y="260"/>
<path d="M1911 254v6l4 -3z" fill="#2a3a46"/>
<g transform="translate(1892 285)"><path d="M-8 0H7M-5 -7L4 6M4 -7L-3 8" stroke="#8a4a1e" stroke-width="1.300"/><path d="M-9 -9l2 2 2 -2M-7 -7v2M-9 6h3l-3 3h3" stroke="#888"/><path d="M7 -2l3 3M10 -2l-3 3" stroke="#777"/></g>
<use href="#x1" x="1889" y="311"/><path d="M1895 304l1 3M1897 309l1 3" stroke="#8a4a1e" stroke-width="1.400"/>
<rect x="1885" y="316" width="16" height="6" fill="#e8d858" stroke="#888"/>
<g transform="translate(1893 355)"><rect x="-9" y="-8" width="12" height="8" fill="#ffffb8" stroke="#7e7a10" stroke-width="1.200"/><path d="M4 -4H10L4 6M4 6h3" stroke="#222"/></g>
<g transform="translate(1893 382)"><rect x="-9" y="-8" width="13" height="12" fill="#ffffb8" stroke="#7e7a10" stroke-width="1.200"/><circle cx="-2" cy="-2" r="5" stroke="#666"/><path d="M5 -3H10L4 7" stroke="#222"/></g>
<g transform="translate(1893 410)" stroke="#9aa2aa"><rect x="-9" y="-9" width="10" height="5"/><rect x="-5" y="-2" width="10" height="5"/><path d="M3 -8H7L4 -3M7 0H11L8 7"/></g>
<g transform="translate(1893 452)"><path d="M-9 -3H-3V3H7V9H-9Z" fill="#ffe24a" stroke="#a06820"/><path d="M-2 -1L3 -6M-2 -1h3M-2 -1v-3" stroke="#222"/><rect x="2" y="-10" width="7" height="7" fill="#9ffcff" stroke="#777"/></g>
<g transform="translate(1893 480)"><path d="M-9 -3H-3V3H7V9H-9Z" fill="#ffe24a" stroke="#a06820"/><path d="M-2 -1L3 -6" stroke="#222"/><circle cx="5" cy="-8" r="1.500" stroke="#222"/><path d="M5 -6V-1M2 -4H8M3 2L5 -1L7 2" stroke="#222"/></g>
<g transform="translate(1893 509)"><rect x="-9" y="-10" width="14" height="14" fill="#ffe24a" stroke="#a06820"/><rect x="-5" y="-9" width="11" height="11" fill="#6fe8ea" stroke="#1a8a90"/><path d="M2 1H6L9 4V10H2Z" fill="#fff" stroke="#555"/></g>
<g transform="translate(1893 538)"><rect x="-9" y="-6" width="18" height="12" fill="#b4faff" stroke="none"/><path d="M-4 -6L-3 6H3L4 -6" fill="#dce9f2" stroke="#333"/><path d="M-9 -7H-4M4 -7H9" stroke="#333"/></g>
<g transform="translate(1893 565)" stroke="#b0b8c0"><path d="M-9 -3L-3 -9H4L9 0V8H-9Z" fill="#e4ecf2"/><path d="M-9 -3H-1V8M-1 -3L4 -9"/></g>
<g transform="translate(1893 594)" stroke="#b0b8c0"><path d="M-9 -3Q-3 -9 4 -8Q9 -4 9 0V6L2 9H-9Z" fill="#dfe8ee"/><path d="M-9 1Q-3 -5 3 -1V9" /></g>
<g transform="translate(1893 621)" stroke="#b0b8c0"><path d="M-9 -3L-1 -9L9 -2V4L2 9H-9Z" fill="#dfe8ee"/><path d="M-1 -9L2 0V9" /></g>
<g transform="translate(1893 663)"><rect x="-8" y="-1" width="7" height="7" fill="#9ffcff" stroke="#444"/><path d="M-8 -1L1 -8H8L1 -1M8 -8V0L-1 6" stroke="#333" stroke-dasharray="3 1"/></g>
<g transform="translate(1893 690)"><path d="M0 -10V10" stroke="#444" stroke-dasharray="3 2"/><circle cx="-6" cy="1" r="3" fill="#e4f6f6" stroke="#444"/><circle cx="6" cy="1" r="3" fill="#6fe8ea" stroke="#444"/><path d="M-3 -2L3 4M-3 4L3 -2" stroke="#333"/></g>
<g transform="translate(1893 719)"><path d="M-9 -5L-4 -9L9 0V9H-3Z" fill="#fff" stroke="#333"/><path d="M-9 -5L-4 -9L-3 -4Z" fill="#2ad0d0"/><path d="M-8 -3L-3 9H3L-1 2Z" fill="#bbb"/><path d="M1 9L9 1V9Z" fill="#a4ecec"/></g>
<g transform="translate(1893 746)"><path d="M-9 5Q-6 -6 5 -8L9 -4L3 8L-1 3Q-5 2 -9 5Z" fill="#eaffff" stroke="#444"/><path d="M0 0L9 -4M-1 3L5 -8" stroke="#18b0b0" stroke-width="1.400"/></g>
<g transform="translate(1893 775)"><path d="M-8 8V-4Q0 -9 8 -4V8Q0 4 -8 8Z" fill="#d4f6f6" stroke="#555"/></g>
<g transform="translate(1893 817)" stroke="#b6c0c8"><rect x="-9" y="-8" width="19" height="16" fill="#e4ecf2" stroke="none"/><path d="M0.500 -10V10" stroke-width="1.400"/><path d="M-8 -6H-4Q-2 -2 -2 7H-8Z" fill="#f2f6f9"/><path d="M9 -6H5Q3 -2 3 7H9Z" fill="#f2f6f9"/></g>
<g transform="translate(1893 844)" stroke="#b6c0c8"><rect x="-3" y="-9" width="12" height="11" fill="#f0f4f7"/><circle cx="-3" cy="3" r="6" fill="#e0e8ee"/></g>
<g transform="translate(1893 871)" stroke="#b6c0c8"><rect x="-3" y="-9" width="12" height="11" fill="#f0f4f7"/><circle cx="-3" cy="3" r="6" fill="#ccd6de"/></g>
<g transform="translate(1893 900)" stroke="#b6c0c8"><rect x="-8" y="-7" width="15" height="15" fill="#e4ecf2"/><path d="M-8 -7L-5 -9H9V6L7 8M7 -7L9 -9"/><path d="M-5 -3H5M-5 1H5M-5 4H5" stroke-dasharray="1.500 2" stroke="#8a96a0"/></g>
</g>
</svg>
</body></html>
